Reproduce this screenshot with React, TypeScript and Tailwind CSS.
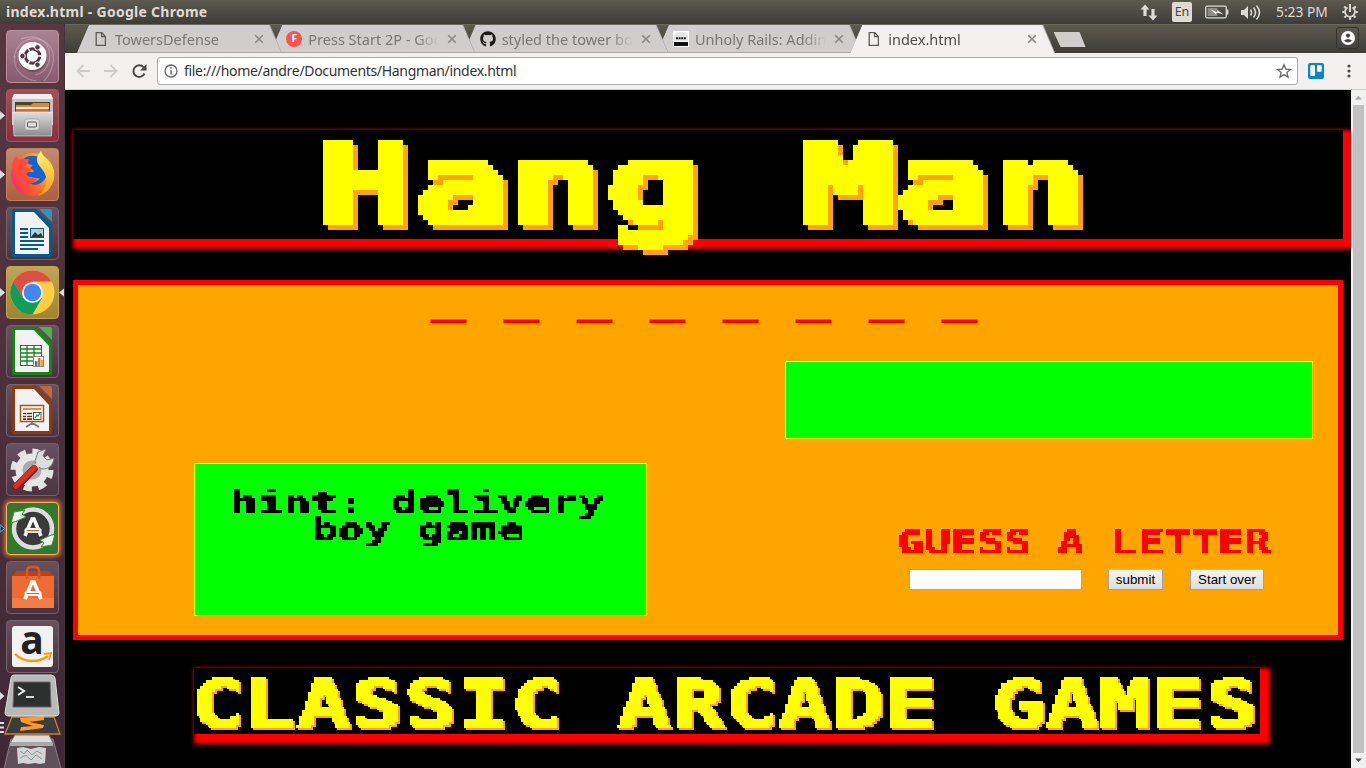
import type { ReactNode } from "react";
import { FaGithub } from "react-icons/fa";

const BAR = "bg-gradient-to-b from-[#5d5a50] to-[#3d3c38]";

function PageIcon() {
  return (
    <svg width="16" height="16" viewBox="0 0 16 16" fill="none" stroke="#5c5c5c" strokeWidth="1.3">
      <path d="M3.2 1.7h5.6l3.6 3.8v8.8H3.2z" />
      <path d="M8.6 1.9v3.8h3.6" />
    </svg>
  );
}

function Tab({ icon, title, active = false, z }: { icon: ReactNode; title: string; active?: boolean; z: string }) {
  return (
    <div
      className={`relative -mr-[11.7px] h-[28px] w-[205px] shrink-0 bg-[#aaa] [clip-path:polygon(12px_0,193px_0,205px_100%,0_100%)] ${z}`}
    >
      <div
        className={`flex items-center pl-[16px] [clip-path:polygon(12px_0,192px_0,204px_100%,0_100%)] ${
          active ? "h-[28px] bg-[#f2f1f0]" : "h-[27px] bg-[#d0cecd]"
        }`}
      >
        <span className="flex w-[16px] justify-center">{icon}</span>
        <span
          className={`ml-[6px] w-[133px] overflow-hidden whitespace-nowrap text-[14.5px] leading-[20px] [mask-image:linear-gradient(to_right,black_108px,transparent_131px)] ${
            active ? "text-[#4c4c4c]" : "text-[#777]"
          }`}
        >
          {title}
        </span>
        <svg className="ml-[6px]" width="10" height="10" viewBox="0 0 10 10" stroke="#888" strokeWidth="1.6">
          <path d="M1.2 1.2l7.6 7.6M8.8 1.2L1.2 8.8" />
        </svg>
      </div>
    </div>
  );
}

function Tile({ tone, children, arrow = "", right = false }: { tone: string; children: ReactNode; arrow?: string; right?: boolean }) {
  return (
    <div className="relative flex h-[53px] w-full shrink-0 items-center justify-center">
      {arrow && (
        <svg className="absolute left-0 top-[22px]" width="6" height="9" viewBox="0 0 6 9">
          <path d="M0 .7L4.6 4.5 0 8.3z" fill={arrow === "blue" ? "#303040" : "#ddd"} stroke={arrow === "blue" ? "#5ab0e0" : "#ddd"} />
        </svg>
      )}
      {right && (
        <svg className="absolute right-0 top-[22px]" width="6" height="9" viewBox="0 0 6 9">
          <path d="M6 .5L1 4.5l5 4z" fill="#ddd" />
        </svg>
      )}
      <div className={`flex h-[53px] w-[53px] items-center justify-center rounded-[4px] border ${tone}`}>{children}</div>
    </div>
  );
}

function UbuntuIcon() {
  return (
    <svg width="51" height="51" viewBox="0 0 51 51">
      <g fill="none" stroke="#fff" strokeOpacity=".25" strokeWidth="1.2">
        <path d="M7 27C10 5 34 2 44 17c5 9 2 23-7 33" />
        <path d="M14 8c18-7 32 5 28 23-3 9-8 12-14 13" />
        <path d="M8 25c-3 14 9 23 21 25" />
      </g>
      <circle cx="26" cy="27" r="14" fill="#0003" />
      <circle cx="25.5" cy="25" r="14" fill="#fff" />
      <circle cx="25.5" cy="25" r="7.2" fill="none" stroke="#5a3545" strokeWidth="3.2" />
      <g stroke="#fff" strokeWidth="1.4">
        <path d="M25.5 25L37 25M25.5 25l-5.7-10M25.5 25l-5.7 10" />
      </g>
      <circle cx="25.5" cy="25" r="5.4" fill="#fff" />
      <g fill="#5a3545" stroke="#fff" strokeWidth="1">
        <circle cx="15.5" cy="25" r="2.8" />
        <circle cx="30.5" cy="16.3" r="2.8" />
        <circle cx="30.5" cy="33.7" r="2.8" />
      </g>
    </svg>
  );
}

function FilesIcon() {
  return (
    <svg width="51" height="51" viewBox="0 0 51 51">
      <defs>
        <linearGradient id="cab" x2="0" y2="1">
          <stop stopColor="#ddd" />
          <stop offset="1" stopColor="#8c8c8c" />
        </linearGradient>
      </defs>
      <path d="M7 4h37l2 5v26H5V9z" fill="#c4c4c4" />
      <path d="M7 4h37l2 5H5z" fill="#eee" />
      <path d="M8 12h35v16H8z" fill="#443" />
      <path d="M9 15h15l2-2h16v8H9z" fill="#e28434" />
      <path d="M9 17h33v7H9z" fill="#f4ede0" />
      <path d="M9 19h33v6H9z" fill="#d66b2a" />
      <path d="M5.500 22h40l-1 24H7z" fill="url(#cab)" stroke="#eee" strokeWidth=".6" />
      <rect x="18" y="29" width="14" height="11" rx="2" fill="#ddd" stroke="#888" strokeWidth=".5" />
      <rect x="20.500" y="32" width="9" height="5" rx="1" fill="#ddd" stroke="#555" />
    </svg>
  );
}

function FirefoxIcon() {
  return (
    <svg width="51" height="51" viewBox="0 0 51 51">
      <defs>
        <linearGradient id="ff" x1="0" y1=".8" x2="1" y2=".2">
          <stop stopColor="#f0256a" />
          <stop offset=".45" stopColor="#ff6a21" />
          <stop offset="1" stopColor="#ffe035" />
        </linearGradient>
        <linearGradient id="fy" x2="0" y2="1">
          <stop stopColor="#fff36b" />
          <stop offset="1" stopColor="#ff9a20" />
        </linearGradient>
      </defs>
      <circle cx="25.500" cy="25.500" r="21.500" fill="url(#ff)" />
      <path d="M14 12c5-6 15-7 21-2 5 4 6 12 4 18-3 7-11 10-17 6 6 0 9-2 11-5-4 1-7-1-10-1-3-1-5-3-2-5h6c0-2-2-3-4-4l3-3c-3 0-5-1-6-3-2 0-4 0-6-1z" fill="#1463d6" />
      <path d="M5 17c0-4 2-8 4-10l3 4c3-2 7-1 10-1l-1 4-4 4 7 2c-1 4-7 3-6 6 3 5 8 2 12 5-5 6-14 3-16-2-4-4-6-8-9-12z" fill="#ff4a3c" />
      <path d="M34 2c2 7 11 10 13 20 2 12-6 23-17 25 8-5 12-14 8-22-3-7-9-9-8-16 1-3 2-5 4-7z" fill="url(#fy)" />
    </svg>
  );
}

function DocIcon({ color, light, children }: { color: string; light: string; children: ReactNode }) {
  return (
    <svg width="51" height="51" viewBox="0 0 51 51">
      <path d="M7 1h22l16 16v30q0 2-2 2H7q-2 0-2-2V3q0-2 2-2z" fill={color} />
      <path d="M32 1h11q2 0 2 2v11z" fill={light} />
      <path d="M8 4h19l15 16v26H8z" fill="#f2f2f2" />
      {children}
    </svg>
  );
}

function ChromeIcon() {
  return (
    <svg width="51" height="51" viewBox="0 0 51 51">
      <circle cx="25.5" cy="25.500" r="22" fill="#ffcd43" />
      <path d="M6.400 14.500A22 22 0 0 1 44.600 14.500H25.500L16 31z" fill="#dd4f43" />
      <path d="M6.400 14.500A22 22 0 0 0 25.500 47.500L35 31 16 31z" fill="#109d58" />
      <circle cx="25.500" cy="25.500" r="10.500" fill="#f4f4f4" />
      <circle cx="25.500" cy="25.500" r="8.700" fill="#4285f4" />
    </svg>
  );
}

function ToolsIcon() {
  return (
    <svg width="51" height="51" viewBox="0 0 51 51">
      <circle cx="25" cy="26" r="18.5" fill="none" stroke="#e2e2e2" strokeWidth="6" strokeDasharray="8 6.500" />
      <circle cx="25" cy="26" r="13" fill="#aaa" stroke="#e6e6e6" strokeWidth="7" />
      <path d="M30 22l-2-5 3-9 8-3-3 7 4 4 7-2c-1 8-5 11-12 11z" fill="#ddd" stroke="#777" />
      <path d="M14 37L35 17" stroke="#ddd" strokeWidth="5" />
      <path d="M9 43L27 25" stroke="#8e1713" strokeWidth="7.500" strokeLinecap="round" />
      <path d="M9 42L27 24" stroke="#d72f28" strokeWidth="5.500" strokeLinecap="round" />
    </svg>
  );
}

function LauncherA({ y = 0 }: { y?: number }) {
  return (
    <g transform={`translate(0 ${y})`} fill="none" stroke="#fff" strokeWidth="3.600">
      <path d="M18 33l7-17h2l7 17" />
      <rect x="18.500" y="26" width="15" height="3" rx="1.500" stroke="#fff" strokeWidth="2.200" fill="#e8632b" />
    </g>
  );
}

function UpdaterIcon() {
  return (
    <svg width="51" height="51" viewBox="0 0 51 51">
      <circle cx="26" cy="25.500" r="19" fill="#3a3a3a" stroke="#dcdcdc" strokeWidth="4.500" />
      <path d="M4 20L7 9l11-2-3 4 4 3-9 4z" fill="#eee" stroke="#3a8a34" />
      <path d="M48 31l-3 11-11 2 3-4-4-3 9-4z" fill="#eee" stroke="#3a8a34" />
      <LauncherA />
    </svg>
  );
}

function BagIcon() {
  return (
    <svg width="51" height="51" viewBox="0 0 51 51">
      <path d="M5 14l4-5h33l5 5z" fill="#b8421c" />
      <path d="M5 14h42v32H5z" fill="#ee6b34" />
      <path d="M5 36h42v10H5z" fill="#f47d45" />
      <path d="M20 17V9q0-4 4-4h4q4 0 4 4v8" fill="none" stroke="#d95525" strokeWidth="2.600" />
      <LauncherA y={4} />
    </svg>
  );
}

function AmazonIcon() {
  return (
    <svg width="51" height="51" viewBox="0 0 51 51">
      <rect x="5" y="5" width="41" height="41" rx="3" fill="#f2f2f2" />
      <text x="25" y="33" textAnchor="middle" fontFamily="Open Sans" fontWeight="700" fontSize="39" fill="#222">a</text>
      <path d="M8 33c9 9 23 9 33 2" fill="none" stroke="#f90" strokeWidth="2.400" />
      <path d="M37 33l7-1-2 7" fill="none" stroke="#f90" strokeWidth="1.800" />
    </svg>
  );
}

function TerminalStack() {
  return (
    <svg className="block shrink-0" width="65" height="96" viewBox="0 0 65 96">
      <path d="M11 66h42l8 30H4z" fill="#60505a" stroke="#8d7d87" />
      <path d="M15 62h34l4 8H10z" fill="#ddd" stroke="#777" />
      <path d="M10 70h43v3H10z" fill="#aaa" />
      <path d="M17 75l6-1 8 2 8-2 7 1-1 15-5 1-5-1-7 1-5-1-5 1z" fill="#d2d5d4" />
      <path d="M20 78l4 3 3-4 5 5 5-4 5 3M20 85l6-3 5 5 5-5 6 4" stroke="#8d9695" fill="none" />
      <path d="M12 44h42l6 17H5z" fill="#3c3c3c" stroke="#c9832c" strokeWidth="1.300" />
      <path d="M20 45l24-2v4l-15 2 15 3-1 3-23 3 1-4 12-1-12-4z" fill="#ff9a25" />
      <path d="M14 2h37q3 0 4 3l4 35q0 3-3 3H8q-3 0-3-3L11 5q0-3 3-3z" fill="#b9b9b9" stroke="#ddd" />
      <path d="M14 9h36l1 25H13z" fill="#2d302f" stroke="#666" />
      <path d="M18 14l6 4-6 4" stroke="#eee" strokeWidth="2" fill="none" />
      <path d="M26 24h8" stroke="#eee" strokeWidth="1.800" />
      <path d="M0 19l4.500 4L0 27z" fill="#ddd" />
      <path d="M0 50h4M0 54.500h4M0 59h4" stroke="#ddd" strokeWidth="2" />
    </svg>
  );
}

function Launcher() {
  const plain = "border-[#75626d] bg-gradient-to-b from-[#66525e] to-[#4a3440]";
  return (
    <aside className="flex w-[65px] shrink-0 flex-col overflow-hidden border-r border-[#40343a] bg-gradient-to-b from-[#583740] to-[#402836] pt-[6px]">
      <div className="flex flex-col gap-[6px]">
        <Tile tone="border-[#b78f9b] bg-gradient-to-b from-[#a98492] to-[#895a6e]"><UbuntuIcon /></Tile>
        <Tile tone="border-[#a95560] bg-gradient-to-b from-[#a0505a] to-[#84333e]" arrow="white"><FilesIcon /></Tile>
        <Tile tone="border-[#c28460] bg-gradient-to-b from-[#c38b6e] to-[#ac6040]" arrow="white"><FirefoxIcon /></Tile>
        <Tile tone={plain}>
          <DocIcon color="#075b88" light="#3b8dba">
            <path d="M13 21h8M13 25h8M13 29h8M13 33h24M13 37h24M13 41h18" stroke="#075b88" strokeWidth="2" />
            <rect x="23.500" y="20.500" width="13" height="9" fill="#a8d5ea" stroke="#075b88" />
            <path d="M24 29l4-5 3 3 3-2 2 4z" fill="#333" />
            <circle cx="33.500" cy="23" r="1.300" fill="#fb3" />
          </DocIcon>
        </Tile>
        <Tile tone="border-[#c1a552] bg-gradient-to-b from-[#c0a556] to-[#a18430]" arrow="white" right><ChromeIcon /></Tile>
        <Tile tone={plain}>
          <DocIcon color="#198318" light="#4fb344">
            <rect x="13.500" y="19.500" width="21" height="20" fill="#fff" stroke="#198318" />
            <path d="M13 23h22M13 27h22M13 31h22M13 35h22M20 19v21M27 19v21" stroke="#198318" strokeWidth="1.300" />
            <rect x="26.500" y="30.500" width="10" height="10" fill="#fff" stroke="#888" />
            <path d="M28 40v-5h2.500v5z" fill="#2584c4" /><path d="M31 40v-8h2.500v8z" fill="#e16e21" /><path d="M34 40v-6h2v6z" fill="#eba52c" />
          </DocIcon>
        </Tile>
        <Tile tone={plain}>
          <DocIcon color="#8c3c10" light="#c16a38">
            <rect x="13.500" y="20.500" width="23" height="16" fill="#fff" stroke="#b54c13" strokeWidth="1.500" />
            <path d="M16 24h18" stroke="#eb8b4d" strokeWidth="2" />
            <path d="M16 28.500h3M16 31.500h3M16 34.200h3M20 28.500h5M20 31.500h5M20 34.200h5" stroke="#7c2c0b" strokeWidth="1.700" />
            <rect x="26.500" y="27.500" width="7.500" height="7" fill="#fff" stroke="#555" />
            <path d="M28 33l2-3 1 1 2-3" stroke="#2a9a30" strokeWidth="1.300" fill="none" />
            <path d="M25 37v2M19 42l5-3h3l5 3" stroke="#777" strokeWidth="1.800" fill="none" />
          </DocIcon>
        </Tile>
        <Tile tone={plain}><ToolsIcon /></Tile>
        <Tile tone="border-[#ffb070] bg-[#32792c] shadow-[0_0_4px_2px_#c96a32]" arrow="blue"><UpdaterIcon /></Tile>
        <Tile tone={plain}><BagIcon /></Tile>
        <Tile tone={plain}><AmazonIcon /></Tile>
      </div>
      <TerminalStack />
    </aside>
  );
}

function TopBar() {
  return (
    <header className={`flex h-[24px] shrink-0 items-center ${BAR} pl-[6px] pr-[8px] text-[#dfdbd2]`}>
      <span className="text-[14px] font-bold leading-[20px] tracking-[0.27px]">index.html - Google Chrome</span>
      <div className="ml-auto flex items-center">
        <svg width="18" height="17" viewBox="0 0 18 17" fill="#dfdbd2">
          <path d="M5 .5l4.500 5H6.600V12H3.400V5.500H.5z" />
          <path d="M13 16.500l-4.500-5h2.900V5h3.200v6.500h2.900z" />
        </svg>
        <span className="ml-[14px] flex h-[20px] w-[20px] items-center justify-center rounded-[2px] bg-[#dfdbd2] text-[12.500px] text-[#45443f]">En</span>
        <svg className="ml-[13px]" width="24" height="14" viewBox="0 0 24 14">
          <rect x=".7" y="1.200" width="20.600" height="11.600" rx="1.500" fill="none" stroke="#dfdbd2" strokeWidth="1.300" />
          <path d="M2.500 3h10v8h-10z" fill="#8e8b83" />
          <path d="M22.500 4.500v5" stroke="#dfdbd2" strokeWidth="1.800" />
          <path d="M5 4l7 3.200.5-2.200 6 4.500-7-2-.5 2z" fill="#eee" />
        </svg>
        <svg className="ml-[12px]" width="21" height="17" viewBox="0 0 21 17">
          <path d="M0 6h3l4-4v13l-4-4H0z" fill="#dfdbd2" />
          <path d="M9.500 5.500q2 3 0 6M12.500 3.500q4 5 0 10M15.500 1.500q6 7 0 14" fill="none" stroke="#dfdbd2" strokeWidth="1.500" />
        </svg>
        <span className="ml-[14px] w-[54px] whitespace-nowrap text-[13.800px] leading-[20px]">5:23 PM</span>
        <svg className="ml-[12px]" width="16" height="16" viewBox="0 0 16 16" fill="none" stroke="#dfdbd2">
          <path d="M5.500 3.500a5 5 0 1 0 5 0" strokeWidth="1.800" />
          <path d="M8 0v8" strokeWidth="2" />
          <path d="M.3 8h2.200M13.500 8h2.200M2.300 2.500l1.800 1.800M13.700 2.500l-1.800 1.800M2.500 13.500L4 12M13.500 13.500L12 12M8 13.500v2.300" strokeWidth="2.200" />
        </svg>
      </div>
    </header>
  );
}

function TabStrip() {
  return (
    <div className={`flex h-[29px] shrink-0 border-t border-[#6b685c] ${BAR} pl-[12px]`}>
      <Tab z="z-40" title="TowersDefense" icon={<PageIcon />} />
      <Tab z="z-30" title="Press Start 2P - Google Fonts" icon={<span className="flex h-[16px] w-[16px] items-center justify-center rounded-full bg-[#ff5252] text-[10px] font-bold text-white">F</span>} />
      <Tab z="z-20" title="styled the tower board" icon={<FaGithub size={16} color="#1b1b1b" />} />
      <Tab
        z="z-10"
        title="Unholy Rails: Adding"
        icon={
          <svg width="16" height="16" viewBox="0 0 16 16">
            <path d="M0 0h16v16H0z" fill="#fff" />
            <path d="M1 5q1-4 7-4t7 4v5H1z" fill="#e4e4e4" />
            <path d="M3 7.300h10" stroke="#222" strokeWidth="2" strokeDasharray="2 .6" />
            <path d="M1 11h14v4H1z" fill="#111" />
          </svg>
        }
      />
      <Tab z="z-50" active title="index.html" icon={<PageIcon />} />
      <div className="ml-[10px] mt-[7px] h-[15px] w-[32px] bg-[#d0cecd] [clip-path:polygon(0_0,26px_0,100%_100%,7px_100%)]" />
      <div className="ml-auto mr-[7px] mt-[2px] flex h-[22px] w-[23px] items-center justify-center rounded-[3px] border border-[#33322e]">
        <svg width="14" height="14" viewBox="0 0 14 14">
          <circle cx="7" cy="7" r="7" fill="#fff" />
          <circle cx="7" cy="4.600" r="2.100" fill="#45443f" />
          <path d="M3 9.500q4-3 8 0-4 4-8 0z" fill="#45443f" />
        </svg>
      </div>
    </div>
  );
}

function Toolbar() {
  return (
    <div className="flex h-[37px] shrink-0 items-center border-b border-[#ccc] bg-[#f2f1f0] pl-[11px] pr-[13px]">
      <svg width="14" height="14" viewBox="0 0 14 14" fill="none" stroke="#ccc" strokeWidth="2"><path d="M14 7H1.500M7.500 1L1.500 7l6 6" /></svg>
      <svg className="ml-[14px]" width="14" height="14" viewBox="0 0 14 14" fill="none" stroke="#ccc" strokeWidth="2"><path d="M0 7h12.500M6.500 1l6 6-6 6" /></svg>
      <svg className="ml-[14px]" width="15" height="15" viewBox="0 0 15 15">
        <path d="M12.500 9.500A5.800 5.800 0 1 1 11.500 3.200" fill="none" stroke="#4a4a4a" strokeWidth="2" />
        <path d="M14.500 0v6.500H8z" fill="#4a4a4a" />
      </svg>
      <div className="ml-[10px] flex h-[28px] w-[1141px] items-center rounded-[3px] border border-[#aaa] bg-white pl-[6px] pr-[5px]">
        <svg width="14" height="14" viewBox="0 0 14 14" fill="none" stroke="#666">
          <circle cx="7" cy="7" r="6" strokeWidth="1.300" /><path d="M7 6v4.500M7 3.300v1.500" strokeWidth="1.500" />
        </svg>
        <span className="ml-[6px] text-[14px] leading-[20px] tracking-[-0.320px] text-[#333]">file:///home/andre/Documents/Hangman/index.html</span>
        <svg className="ml-auto" width="16" height="16" viewBox="0 0 16 16" fill="none" stroke="#666" strokeWidth="1.300">
          <path d="M8 1.800l1.800 4.300 4.700.4-3.600 3 1.100 4.600L8 11.600l-4 2.500 1.100-4.600-3.600-3 4.700-.4z" />
        </svg>
      </div>
      <svg className="ml-[10px]" width="16" height="16" viewBox="0 0 16 16">
        <rect width="16" height="16" rx="2" fill="#0a84cf" /><rect x="2.300" y="2.300" width="4.700" height="10.700" rx=".7" fill="#fff" /><rect x="9" y="2.300" width="4.700" height="6.400" rx=".7" fill="#fff" />
      </svg>
      <svg className="ml-auto" width="8" height="16" viewBox="0 0 8 16" fill="#4a4a4a"><circle cx="4" cy="3" r="1.600" /><circle cx="4" cy="8" r="1.600" /><circle cx="4" cy="13" r="1.600" /></svg>
    </div>
  );
}

// Mosaic filters: sample one dot per block, then grow each sample to fill its block.
function PixelFilters() {
  const blocks = [
    { id: "pixel-5", size: 5, mid: 2, drop: 5 },
    { id: "pixel-3", size: 3, mid: 1, drop: 2 },
    { id: "pixel-3-flat", size: 3, mid: 1, drop: 0 },
  ];
  return (
    <svg className="absolute h-0 w-0" aria-hidden="true">
      {blocks.map((b) => (
        <filter key={b.id} id={b.id} x="0" y="0" width="1280" height="160" filterUnits="userSpaceOnUse" colorInterpolationFilters="sRGB">
          <feFlood x={b.mid} y={b.mid} width="1" height="1" floodColor="#000" />
          <feComposite x="0" y="0" width={b.size} height={b.size} operator="over" in2="dot" />
          <feTile result="grid" />
          <feComposite in="SourceGraphic" in2="grid" operator="in" />
          <feComponentTransfer>
            <feFuncA type="discrete" tableValues="0 1" />
          </feComponentTransfer>
          <feMorphology operator="dilate" radius={b.mid} result="face" />
          <feOffset in="face" dx={b.drop} dy={b.drop} result="moved" />
          <feFlood floodColor="#ffa500" />
          <feComposite in2="moved" operator="in" result="shade" />
          <feMerge>
            {b.drop > 0 && <feMergeNode in="shade" />}
            <feMergeNode in="face" />
          </feMerge>
        </filter>
      ))}
    </svg>
  );
}

const ARCADE = "block w-fit whitespace-pre font-bold [font-family:'DejaVu_Sans_Mono',monospace]";

function Game() {
  const button =
    "h-[21px] shrink-0 border border-[#a0a0a0] border-t-[#c4c4c4] bg-gradient-to-b from-[#f4f4f4] to-[#dcdcdc] text-[13.333px] leading-[18px] text-black [font-family:'Liberation_Sans',sans-serif]";
  return (
    <main className="min-w-0 flex-1 overflow-hidden bg-black pl-[8px] pt-[40px]">
      <PixelFilters />
      <h1 className="h-[109px] w-[1270px] shadow-[5px_5px_4px_5px_red]">
        <div className="h-[109px] pl-[243px] [filter:url(#pixel-5)]">
          <span className={`${ARCADE} origin-left scale-x-[1.430] text-[112px] leading-[109px] text-[#ffff00] [-webkit-text-stroke:4px_#ffff00]`}>Hang Man</span>
        </div>
      </h1>

      <section className="mt-[41px] h-[360px] w-[1270px] border-[5px] border-[#ff0000] bg-[#ffa500]">
        <div className="h-[76px] whitespace-nowrap pl-[353px] text-[70px] leading-[12px] text-[#ff0000] [font-family:'Liberation_Serif',serif] [word-spacing:20.500px]">
          _ _ _ _ _ _ _ _
        </div>
        <div className="flex">
          <div className="ml-[116px] mt-[102px] h-[153px] w-[453px] border border-[#ffff00] bg-[#00ff00] pt-[25px] text-black">
            <div className="flex flex-col items-center pr-[5px] [filter:url(#pixel-3-flat)]">
              <p className={`${ARCADE} scale-x-[1.430] text-[31px] leading-[27px] [-webkit-text-stroke:0.500px_black]`}>hint: delivery</p>
              <p className={`${ARCADE} scale-x-[1.430] text-[31px] leading-[27px] [-webkit-text-stroke:0.500px_black]`}>boy game</p>
            </div>
          </div>
          <div className="ml-[138px] w-[528px]">
            <div className="h-[78px] border border-[#ffff00] bg-[#00ff00]" />
            <h2 className="mt-[90px] pl-[112px] [filter:url(#pixel-3-flat)]">
              <span className={`${ARCADE} origin-left scale-x-[1.345] text-[33px] leading-[27px] text-[#ff0000] [-webkit-text-stroke:0.500px_red]`}>GUESS A LETTER</span>
            </h2>
            <div className="ml-[124px] mt-[13px] flex">
              <input aria-label="letter" className="h-[21px] w-[173px] border border-[#a9a9a9] bg-white" />
              <button className={`${button} ml-[26px] w-[55px]`}>submit</button>
              <button className={`${button} ml-[27px] w-[74px]`}>Start over</button>
            </div>
          </div>
        </div>
      </section>

      <footer className="ml-[121px] mt-[28px] h-[66px] w-[1066px] shadow-[5px_5px_4px_5px_red]">
        <div className="h-[66px] [filter:url(#pixel-3)]">
          <span className={`${ARCADE} origin-left -translate-x-[4px] scale-x-[1.355] pt-[3px] text-[65.500px] leading-[66px] text-[#ffff00] [-webkit-text-stroke:1.500px_#ffff00]`}>CLASSIC ARCADE GAMES</span>
        </div>
      </footer>
    </main>
  );
}

export default function App() {
  return (
    <div className="flex h-[768px] w-[1366px] flex-col overflow-hidden bg-black [font-family:'Noto_Sans',sans-serif]">
      <TopBar />
      <div className="flex min-h-0 flex-1">
        <Launcher />
        <div className="flex min-w-0 flex-1 flex-col">
          <TabStrip />
          <Toolbar />
          <div className="flex min-h-0 flex-1">
            <Game />
            <div className="flex w-[15px] shrink-0 flex-col items-center justify-between bg-[#f1f1f1] py-[5px]">
              <svg width="7" height="5" viewBox="0 0 7 5" fill="#a3a3a3"><path d="M0 4.500L3.500 1 7 4.500z" /></svg>
              <div className="my-[5px] w-[11px] flex-1 bg-[#c1c1c1]" />
              <svg width="7" height="5" viewBox="0 0 7 5" fill="#505050"><path d="M0 .5L3.500 4 7 .5z" /></svg>
            </div>
          </div>
        </div>
      </div>
    </div>
  );
}
